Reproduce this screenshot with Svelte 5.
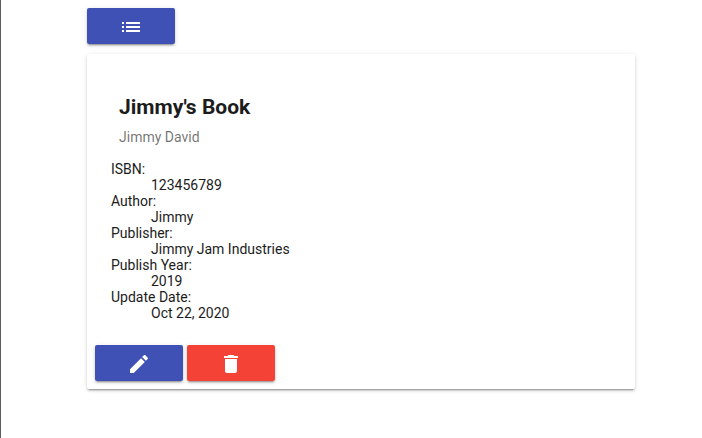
<script>
  const details = [
    ['ISBN:', '123456789'],
    ['Author:', 'Jimmy'],
    ['Publisher:', 'Jimmy Jam Industries'],
    ['Publish Year:', '2019'],
    ['Update Date:', 'Oct 22, 2020']
  ];
</script>

<main>
  <div class="container">
    <button class="btn primary" aria-label="List">
      <svg viewBox="0 0 24 24"><path d="M3 13h2v-2H3v2zm0 4h2v-2H3v2zm0-8h2V7H3v2zm4 4h14v-2H7v2zm0 4h14v-2H7v2zM7 7v2h14V7H7z" /></svg>
    </button>
    <article class="card">
      <header>
        <h2>Jimmy's Book</h2>
        <p>Jimmy David</p>
      </header>
      <dl>
        {#each details as [label, value]}
          <dt>{label}</dt>
          <dd>{value}</dd>
        {/each}
      </dl>
      <div class="actions">
        <button class="btn primary" aria-label="Edit">
          <svg viewBox="0 0 24 24"><path d="M3 17.25V21h3.75L17.81 9.94l-3.75-3.75L3 17.25zM20.71 7.04c.39-.39.39-1.02 0-1.41l-2.34-2.34c-.39-.39-1.02-.39-1.41 0l-1.83 1.83 3.75 3.75 1.83-1.83z" /></svg>
        </button>
        <button class="btn warn" aria-label="Delete">
          <svg viewBox="0 0 24 24"><path d="M6 19c0 1.1.9 2 2 2h8c1.1 0 2-.9 2-2V7H6v12zM19 4h-3.5l-1-1h-5l-1 1H5v2h14V4z" /></svg>
        </button>
      </div>
    </article>
  </div>
</main>

<style>
  :global(body) {
    background: #fff;
  }
  main {
    box-sizing: border-box;
    height: 438px;
    border-left: 1px solid #5c5c5e;
    padding: 8px 67px 0 86px;
    font-family: Roboto, 'Liberation Sans', sans-serif;
    font-size: 14px;
    line-height: 16px;
    color: #1c1c1c;
  }
  .btn {
    box-sizing: border-box;
    display: flex;
    align-items: center;
    justify-content: center;
    width: 88px;
    height: 36px;
    padding: 2px 0 0;
    border: 0;
    border-radius: 2px;
    color: #fff;
    box-shadow: 0 3px 1px -2px rgba(0, 0, 0, 0.2), 0 2px 2px 0 rgba(0, 0, 0, 0.14), 0 1px 5px 0 rgba(0, 0, 0, 0.12);
  }
  .primary {
    background: #3f51b5;
  }
  .warn {
    background: #f44336;
  }
  svg {
    width: 24px;
    height: 24px;
    fill: currentColor;
  }
  .card {
    box-sizing: border-box;
    width: 548px;
    height: 335px;
    margin-top: 10px;
    padding: 24px;
    border-radius: 2px;
    background: #fff;
    box-shadow: 0 3px 1px -2px rgba(0, 0, 0, 0.2), 0 2px 2px 0 rgba(0, 0, 0, 0.14), 0 1px 5px 0 rgba(0, 0, 0, 0.12);
  }
  header {
    padding: 13px 8px 0;
  }
  h2 {
    margin: 0;
    font-size: 21px;
    line-height: 32px;
    font-weight: 700;
  }
  p {
    margin: 6px 0 0;
    color: rgba(0, 0, 0, 0.57);
  }
  dl {
    margin: 16px 0 0;
  }
  dd {
    margin: 0 0 0 40px;
  }
  .actions {
    display: flex;
    gap: 4px;
    margin: 24px -16px 0;
  }
</style>
